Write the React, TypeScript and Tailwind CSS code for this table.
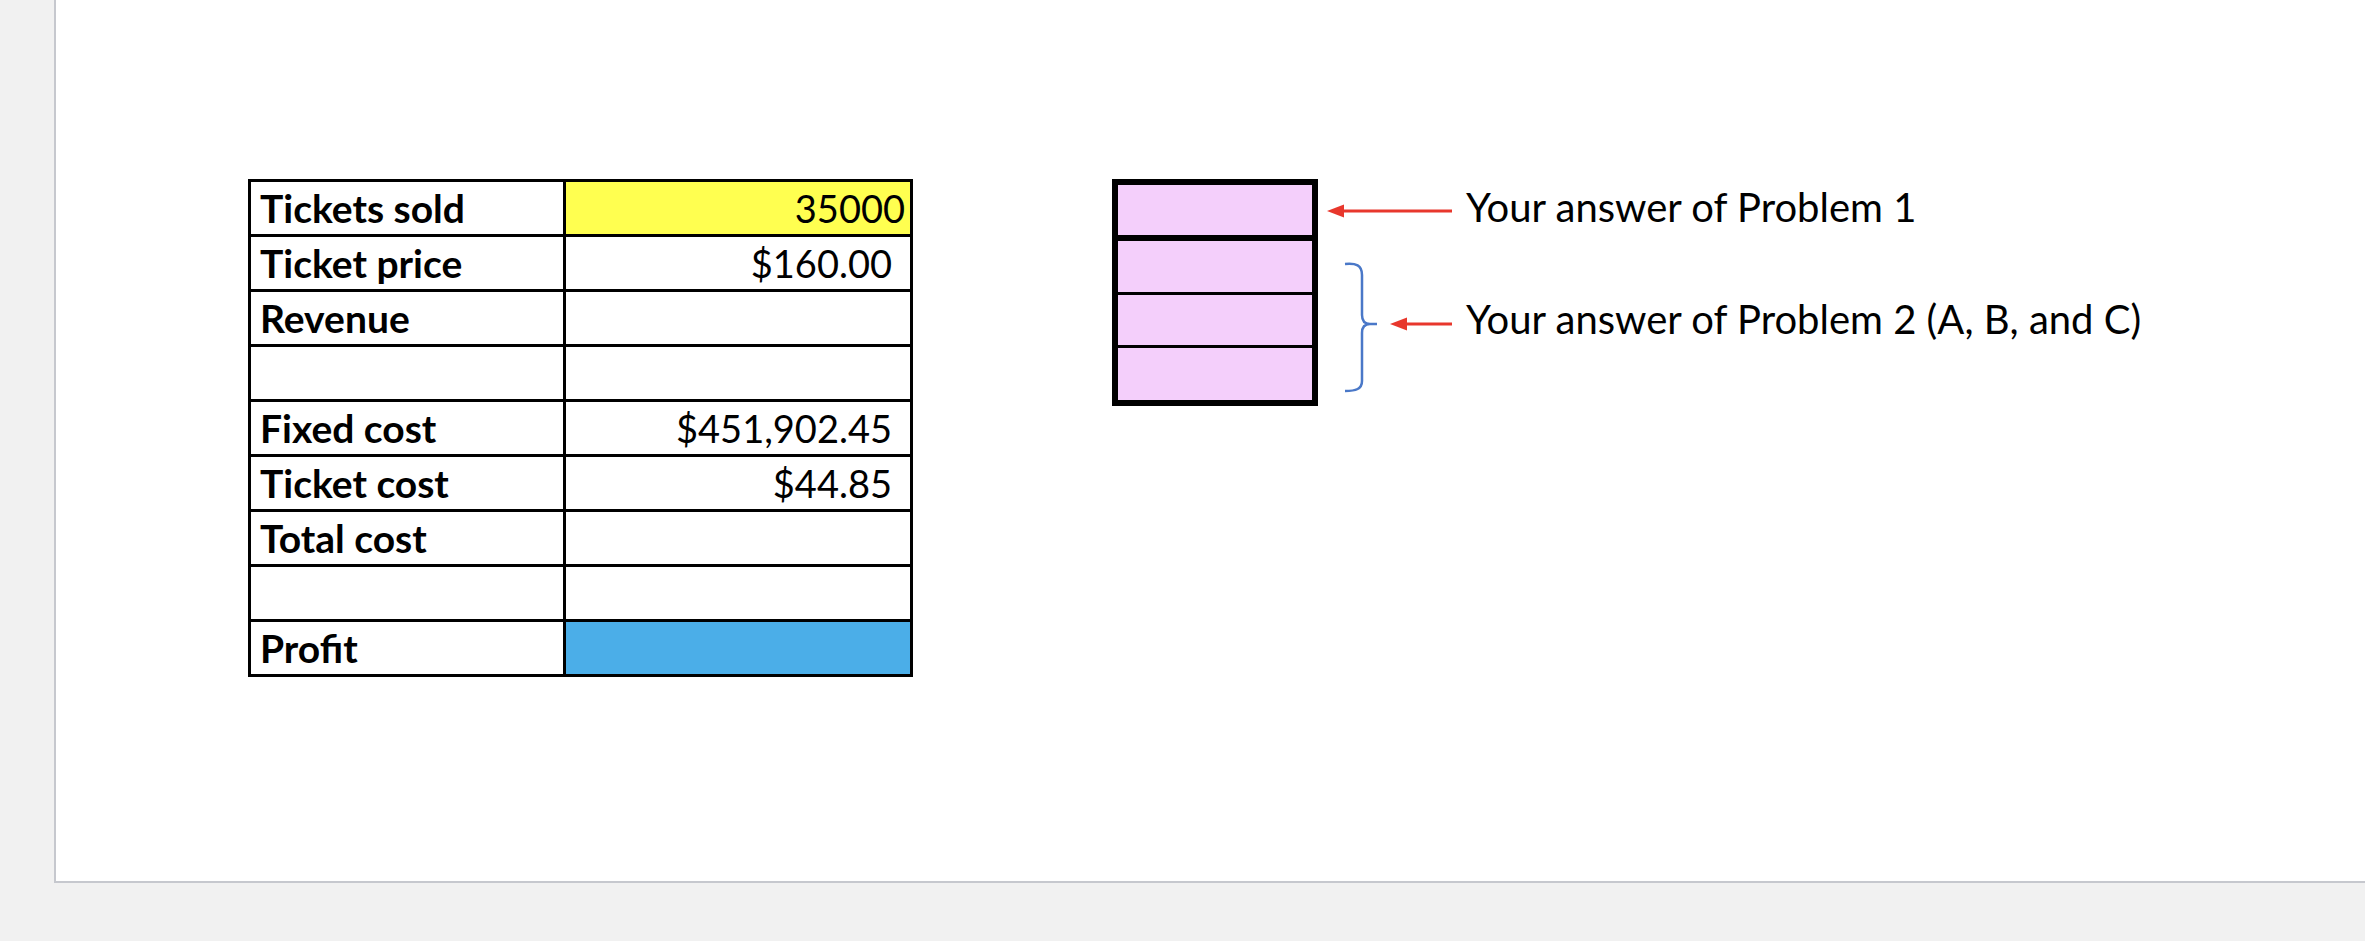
import React from "react";

const rows: { label: string; value: string; kind?: "yellow" | "blue"; pad?: "num" | "cur" }[] = [
  { label: "Tickets sold", value: "35000", kind: "yellow", pad: "num" },
  { label: "Ticket price", value: "$160.00", pad: "cur" },
  { label: "Revenue", value: "" },
  { label: "", value: "" },
  { label: "Fixed cost", value: "$451,902.45", pad: "cur" },
  { label: "Ticket cost", value: "$44.85", pad: "cur" },
  { label: "Total cost", value: "" },
  { label: "", value: "" },
  { label: "Profit", value: "", kind: "blue" },
];

export default function App() {
  return (
    <div className="h-[941px] w-[2365px] bg-[#f1f1f1] overflow-hidden" style={{ fontFamily: "Lato, 'Open Sans', sans-serif" }}>
      <div className="ml-[54px] h-[883px] bg-white border-l-2 border-b-2 border-[#c6c8ce] flex items-start pt-[179px] pl-[192px]">
        {/* Spreadsheet table */}
        <div className="grid grid-cols-[312px_344px] gap-[3px] bg-black p-[3px] w-[665px]">
          {rows.map((r, i) => (
            <React.Fragment key={i}>
              <div className="bg-white h-[52px] flex items-center pl-[9px] text-[39px] font-bold text-black leading-none">
                {r.label}
              </div>
              <div
                className={
                  "h-[52px] flex items-center justify-end text-[38px] text-black leading-none " +
                  (r.kind === "yellow" ? "bg-[#ffff50] " : r.kind === "blue" ? "bg-[#4baee8] " : "bg-white ") +
                  (r.pad === "num" ? "pr-[5px]" : "pr-[18px]")
                }
              >
                {r.value}
              </div>
            </React.Fragment>
          ))}
        </div>

        {/* Answer boxes */}
        <div className="ml-[199px] flex items-start">
          <div className="w-[206px] border-[6px] border-black flex flex-col">
            <div className="h-[56px] bg-[#f4cffb] border-b-[6px] border-black" />
            <div className="h-[54px] bg-[#f4cffb] border-b-[3px] border-black" />
            <div className="h-[53px] bg-[#f4cffb] border-b-[3px] border-black" />
            <div className="h-[52px] bg-[#f4cffb]" />
          </div>
          <svg width="148" height="227" viewBox="0 0 148 227" className="shrink-0">
            <line x1="24" y1="32" x2="134" y2="32" stroke="#e8372c" strokeWidth="3" />
            <polygon points="9,32 26,25.5 26,38.5" fill="#e8372c" />
            <line x1="86" y1="145" x2="134" y2="145" stroke="#e8372c" strokeWidth="3" />
            <polygon points="72,145 89,138.5 89,151.5" fill="#e8372c" />
            <path
              d="M27,85 C38,84 44,86 44,96 L44,136 C44,142 47,145 52,145 L59,145 M52,145 C47,145 44,148 44,154 L44,202 C44,210 38,212 27,212"
              fill="none"
              stroke="#4a78c8"
              strokeWidth="2.5"
            />
          </svg>
          <div className="flex flex-col text-black text-[40px] leading-none whitespace-nowrap">
            <div className="h-[56px] flex items-center">Your answer of Problem 1</div>
            <div className="h-[56px]" />
            <div className="h-[56px] flex items-center">Your answer of Problem 2 (A, B, and C)</div>
          </div>
        </div>
      </div>
    </div>
  );
}
